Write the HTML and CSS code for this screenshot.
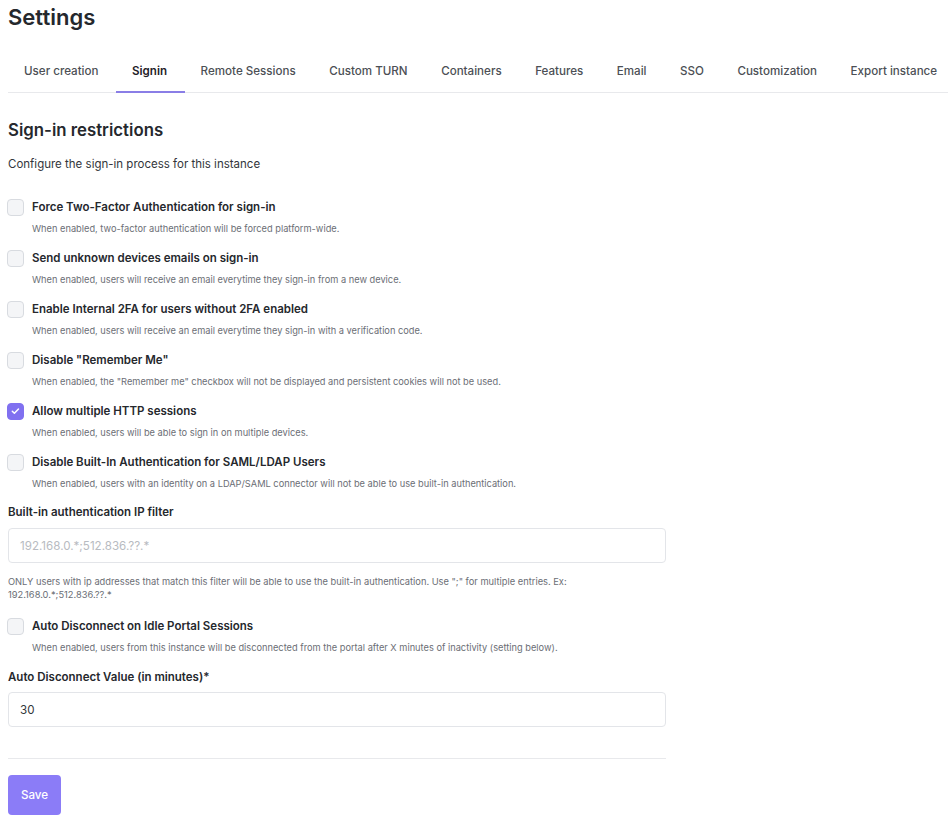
FILE: index.html
```html
<!DOCTYPE html>
<html>
<head>
<meta charset="utf-8">
<link rel="stylesheet" href="styles.css">
</head>
<body>
<div class="page">
  <h1 class="title">Settings</h1>
  <nav class="tabs">
    <span class="tab">User creation</span>
    <span class="tab active">Signin</span>
    <span class="tab">Remote Sessions</span>
    <span class="tab">Custom TURN</span>
    <span class="tab">Containers</span>
    <span class="tab">Features</span>
    <span class="tab">Email</span>
    <span class="tab">SSO</span>
    <span class="tab">Customization</span>
    <span class="tab">Export instance</span>
  </nav>
  <section class="content">
    <h2 class="section-title">Sign-in restrictions</h2>
    <p class="section-desc">Configure the sign-in process for this instance</p>

    <div class="opt">
      <div class="opt-row"><span class="cb"></span><span class="opt-label">Force Two-Factor Authentication for sign-in</span></div>
      <div class="opt-help">When enabled, two-factor authentication will be forced platform-wide.</div>
    </div>
    <div class="opt">
      <div class="opt-row"><span class="cb"></span><span class="opt-label">Send unknown devices emails on sign-in</span></div>
      <div class="opt-help">When enabled, users will receive an email everytime they sign-in from a new device.</div>
    </div>
    <div class="opt">
      <div class="opt-row"><span class="cb"></span><span class="opt-label">Enable Internal 2FA for users without 2FA enabled</span></div>
      <div class="opt-help">When enabled, users will receive an email everytime they sign-in with a verification code.</div>
    </div>
    <div class="opt">
      <div class="opt-row"><span class="cb"></span><span class="opt-label">Disable "Remember Me"</span></div>
      <div class="opt-help">When enabled, the "Remember me" checkbox will not be displayed and persistent cookies will not be used.</div>
    </div>
    <div class="opt">
      <div class="opt-row"><span class="cb checked"><svg viewBox="0 0 16 16" width="16" height="16"><path d="M4.6 8.2l2.2 2.2 4.4-4.6" fill="none" stroke="#fff" stroke-width="1.6" stroke-linecap="round" stroke-linejoin="round"/></svg></span><span class="opt-label">Allow multiple HTTP sessions</span></div>
      <div class="opt-help">When enabled, users will be able to sign in on multiple devices.</div>
    </div>
    <div class="opt">
      <div class="opt-row"><span class="cb"></span><span class="opt-label">Disable Built-In Authentication for SAML/LDAP Users</span></div>
      <div class="opt-help">When enabled, users with an identity on a LDAP/SAML connector will not be able to use built-in authentication.</div>
    </div>

    <div class="field field-ip">
      <label class="field-label">Built-in authentication IP filter</label>
      <div class="input placeholder">192.168.0.*;512.836.??.*</div>
      <div class="field-help">ONLY users with ip addresses that match this filter will be able to use the built-in authentication. Use ";" for multiple entries. Ex: 192.168.0.*;512.836.??.*</div>
    </div>

    <div class="opt opt-auto">
      <div class="opt-row"><span class="cb"></span><span class="opt-label">Auto Disconnect on Idle Portal Sessions</span></div>
      <div class="opt-help">When enabled, users from this instance will be disconnected from the portal after X minutes of inactivity (setting below).</div>
    </div>

    <div class="field field-value">
      <label class="field-label">Auto Disconnect Value (in minutes)*</label>
      <div class="input">30</div>
    </div>

    <hr class="divider">
    <button class="save">Save</button>
  </section>
</div>
</body>
</html>
```
FILE: styles.css
```css
* { box-sizing: border-box; }
html, body { margin: 0; padding: 0; background: #fff; }
body {
  font-family: Inter, "Noto Sans", "Liberation Sans", sans-serif;
  color: #1f2228;
}
.page { padding: 0 0 0 8px; }
.title {
  margin: 0;
  padding-top: 3px;
  font-size: 22px;
  line-height: 28px;
  font-weight: 600;
  color: #25282d;
}
.tabs {
  display: flex;
  margin-top: 30px;
  border-bottom: 1px solid #e8e9ec;
}
.tab {
  padding: 0 17.5px 0 16px;
  height: 32px;
  line-height: 20px;
  font-size: 11.6px;
  font-weight: 500;
  color: #4c4f55;
  white-space: nowrap;
  border-bottom: 2px solid transparent;
  margin-bottom: -1px;
}
.tab.active {
  color: #1f2228;
  font-weight: 600;
  border-bottom: 2px solid #8a7ee6;
}
.content { width: 658px; }
.section-title {
  margin: 25px 0 0;
  font-size: 16.8px;
  line-height: 24px;
  font-weight: 600;
  color: #25282d;
}
.section-desc {
  margin: 13px 0 0;
  font-size: 11.5px;
  line-height: 18px;
  color: #33363b;
}
.opt { margin-top: 25px; }
.opt + .opt { margin-top: 13px; }
.opt-row { display: flex; align-items: center; height: 18px; }
.cb {
  width: 17px;
  height: 17px;
  margin-left: -1px;
  border: 1px solid #d8dbe0;
  border-radius: 4px;
  background: #f4f5f7;
  flex: none;
  display: flex;
  align-items: center;
  justify-content: center;
}
.cb.checked { background: #8070f0; border-color: #8070f0; }
.opt-label {
  margin-left: 8px;
  font-size: 11.5px;
  font-weight: 600;
  color: #25282d;
}
.opt-help {
  margin-top: 6px;
  margin-left: 24px;
  font-size: 9.25px;
  line-height: 14px;
  color: #6b6e75;
}
.field-ip { margin-top: 12px; }
.field-label {
  display: block;
  font-size: 11.5px;
  line-height: 18px;
  font-weight: 600;
  color: #25282d;
}
.input {
  margin-top: 7px;
  height: 35px;
  border: 1px solid #e3e5e9;
  border-radius: 4px;
  padding: 0 11px;
  display: flex;
  align-items: center;
  font-size: 11.6px;
  color: #33363b;
}
.input.placeholder { color: #b8bbc1; }
.field-value .input { margin-top: 6px; }
.field-help {
  margin-top: 12px;
  font-size: 9.3px;
  line-height: 13px;
  color: #6b6e75;
}
.opt.opt-auto { margin-top: 16px; }
.field-value { margin-top: 13px; }
.divider {
  margin: 31px 0 0;
  border: 0;
  border-top: 1px solid #e8e9ec;
}
.save {
  margin-top: 16px;
  width: 53px;
  height: 40px;
  border: 0;
  border-radius: 4px;
  background: #8b7cf7;
  color: #fff;
  font-family: inherit;
  font-size: 11.6px;
  font-weight: 500;
}
```
